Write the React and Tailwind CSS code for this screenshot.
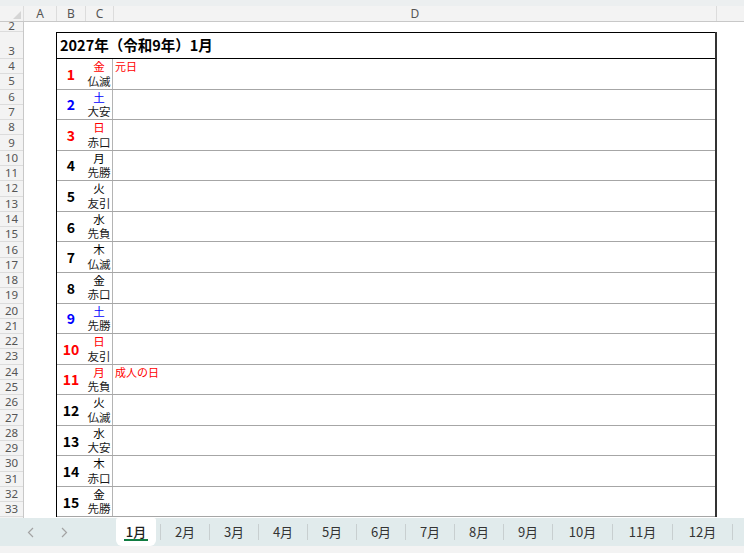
import React from "react";

const RED = "text-[#ff0000]";
const BLUE = "text-[#0000ff]";
const BLK = "text-[#000000]";

const days = [
  { d: 1, w: "金", r: "仏滅", dc: RED, wc: RED, h: "元日" },
  { d: 2, w: "土", r: "大安", dc: BLUE, wc: BLUE },
  { d: 3, w: "日", r: "赤口", dc: RED, wc: RED },
  { d: 4, w: "月", r: "先勝", dc: BLK, wc: BLK },
  { d: 5, w: "火", r: "友引", dc: BLK, wc: BLK },
  { d: 6, w: "水", r: "先負", dc: BLK, wc: BLK },
  { d: 7, w: "木", r: "仏滅", dc: BLK, wc: BLK },
  { d: 8, w: "金", r: "赤口", dc: BLK, wc: BLK },
  { d: 9, w: "土", r: "先勝", dc: BLUE, wc: BLUE },
  { d: 10, w: "日", r: "友引", dc: RED, wc: RED },
  { d: 11, w: "月", r: "先負", dc: RED, wc: RED, h: "成人の日" },
  { d: 12, w: "火", r: "仏滅", dc: BLK, wc: BLK },
  { d: 13, w: "水", r: "大安", dc: BLK, wc: BLK },
  { d: 14, w: "木", r: "赤口", dc: BLK, wc: BLK },
  { d: 15, w: "金", r: "先勝", dc: BLK, wc: BLK },
];

const rowNums = Array.from({ length: 30 }, (_, i) => i + 4);
const tabs = ["1月", "2月", "3月", "4月", "5月", "6月", "7月", "8月", "9月", "10月", "11月", "12月"];

function ColHeader() {
  return (
    <div className="h-[16px] flex bg-[#f3f3f3] border-b border-[#c8c8c8] text-[12px] leading-[15px] text-[#555] font-['Noto_Sans',sans-serif]">
      <div className="w-[24px] relative border-r border-[#dcdcdc]">
        <svg className="absolute right-[2px] bottom-[2px]" width="8" height="8" viewBox="0 0 8 8">
          <polygon points="8,0 8,8 0,8" fill="#d5d5d5" />
        </svg>
      </div>
      <div className="w-[33px] text-center border-r border-[#dcdcdc]">A</div>
      <div className="w-[29px] text-center border-r border-[#dcdcdc]">B</div>
      <div className="w-[28px] text-center border-r border-[#dcdcdc]">C</div>
      <div className="w-[603px] text-center border-r border-[#dcdcdc]">D</div>
      <div className="flex-1" />
    </div>
  );
}

function RowHeaders() {
  return (
    <div className="w-[24px] flex flex-col bg-[#f3f3f3] border-r border-[#c8c8c8] text-[11.5px] text-[#555] font-['Noto_Sans',sans-serif]">
      <div className="h-[10px] overflow-hidden border-b border-[#dcdcdc] flex items-end justify-center leading-[12px]">
        <span className="block -mb-[1px]">2</span>
      </div>
      <div className="h-[27px] border-b border-[#dcdcdc] flex items-end justify-center leading-[13px] pb-[1px]">3</div>
      {rowNums.map((n) => (
        <div
          key={n}
          className="h-[15.286px] border-b border-[#dcdcdc] flex items-center justify-center leading-[12px] shrink-0"
        >
          {n}
        </div>
      ))}
    </div>
  );
}

function DayBlock({ day }) {
  return (
    <div className="h-[30.571px] shrink-0 flex border-b border-[#a6a6a6]">
      <div className={`w-[28px] flex items-center justify-center text-[14px] leading-[16px] font-bold ${day.dc}`}>{day.d}</div>
      <div className="w-[28px] border-r border-[#b4b4b4] flex flex-col text-[11.5px] leading-[13px]">
        <div className={`h-[15px] flex items-center justify-center pl-[1px] ${day.wc}`}>{day.w}</div>
        <div className="h-[14px] flex items-center justify-center pl-[1px] text-[#1a1a1a]">{day.r}</div>
      </div>
      <div className="flex-1 pl-[2px] text-[11px] leading-[13px] text-[#ff0000] pt-[1px]">{day.h || ""}</div>
    </div>
  );
}

function Sheet() {
  return (
    <div className="flex-1 flex flex-col bg-white overflow-hidden">
      <div className="h-[10px] shrink-0" />
      <div className="ml-[32px] w-[661px] flex flex-col border-l border-black border-r-2 border-r-[#333] font-['Noto_Sans_CJK_JP',sans-serif]">
        <div className="h-[27px] shrink-0 border-t border-b border-black flex items-center pl-[3px] pb-[2px] text-[14.5px] leading-[18px] font-bold text-black">
          2027年（令和9年）1月
        </div>
        {days.map((d) => (
          <DayBlock key={d.d} day={d} />
        ))}
      </div>
    </div>
  );
}

function TabBar() {
  return (
    <div className="h-[28px] shrink-0 flex bg-[#e1ebec] font-['Noto_Sans_CJK_JP',sans-serif] text-[13px] text-[#333]">
      <div className="w-[112px] flex items-center pl-[27px] gap-[27px]">
        <svg width="7" height="11" viewBox="0 0 7 11">
          <path d="M6 1 L1.5 5.5 L6 10" fill="none" stroke="#a3a3a3" strokeWidth="1.2" />
        </svg>
        <svg width="7" height="11" viewBox="0 0 7 11">
          <path d="M1 1 L5.5 5.5 L1 10" fill="none" stroke="#a3a3a3" strokeWidth="1.2" />
        </svg>
      </div>
      {tabs.map((t, i) => {
        const wide = t.length > 2;
        const active = i === 0;
        return (
          <div key={t} className="flex items-center">
            <div className={`${wide ? "w-[59px]" : "w-[48px]"} h-full flex items-stretch`}>
              {active ? (
                <div className="mx-[4px] flex-1 bg-white rounded-b-[6px] rounded-t-[2px] flex flex-col items-center justify-center relative">
                  <span className="text-[#1f1f1f] font-medium leading-[16px] mt-[-1px]">{t}</span>
                  <div className="absolute bottom-[5px] left-[8px] right-[8px] h-[2px] bg-[#107c41]" />
                </div>
              ) : (
                <div className="flex-1 flex items-center justify-center leading-[16px]">{t}</div>
              )}
            </div>
            <div className="w-px h-[16px] bg-[#c8cfd0]" />
          </div>
        );
      })}
      <div className="flex-1" />
    </div>
  );
}

export default function App() {
  return (
    <div className="w-[744px] h-[553px] flex flex-col overflow-hidden bg-white">
      <div className="h-[6px] shrink-0 bg-[#eceff0]" />
      <ColHeader />
      <div className="flex-1 flex overflow-hidden min-h-0">
        <RowHeaders />
        <Sheet />
      </div>
      <TabBar />
      <div className="h-[7px] shrink-0 bg-[#f3f3f3]" />
    </div>
  );
}
